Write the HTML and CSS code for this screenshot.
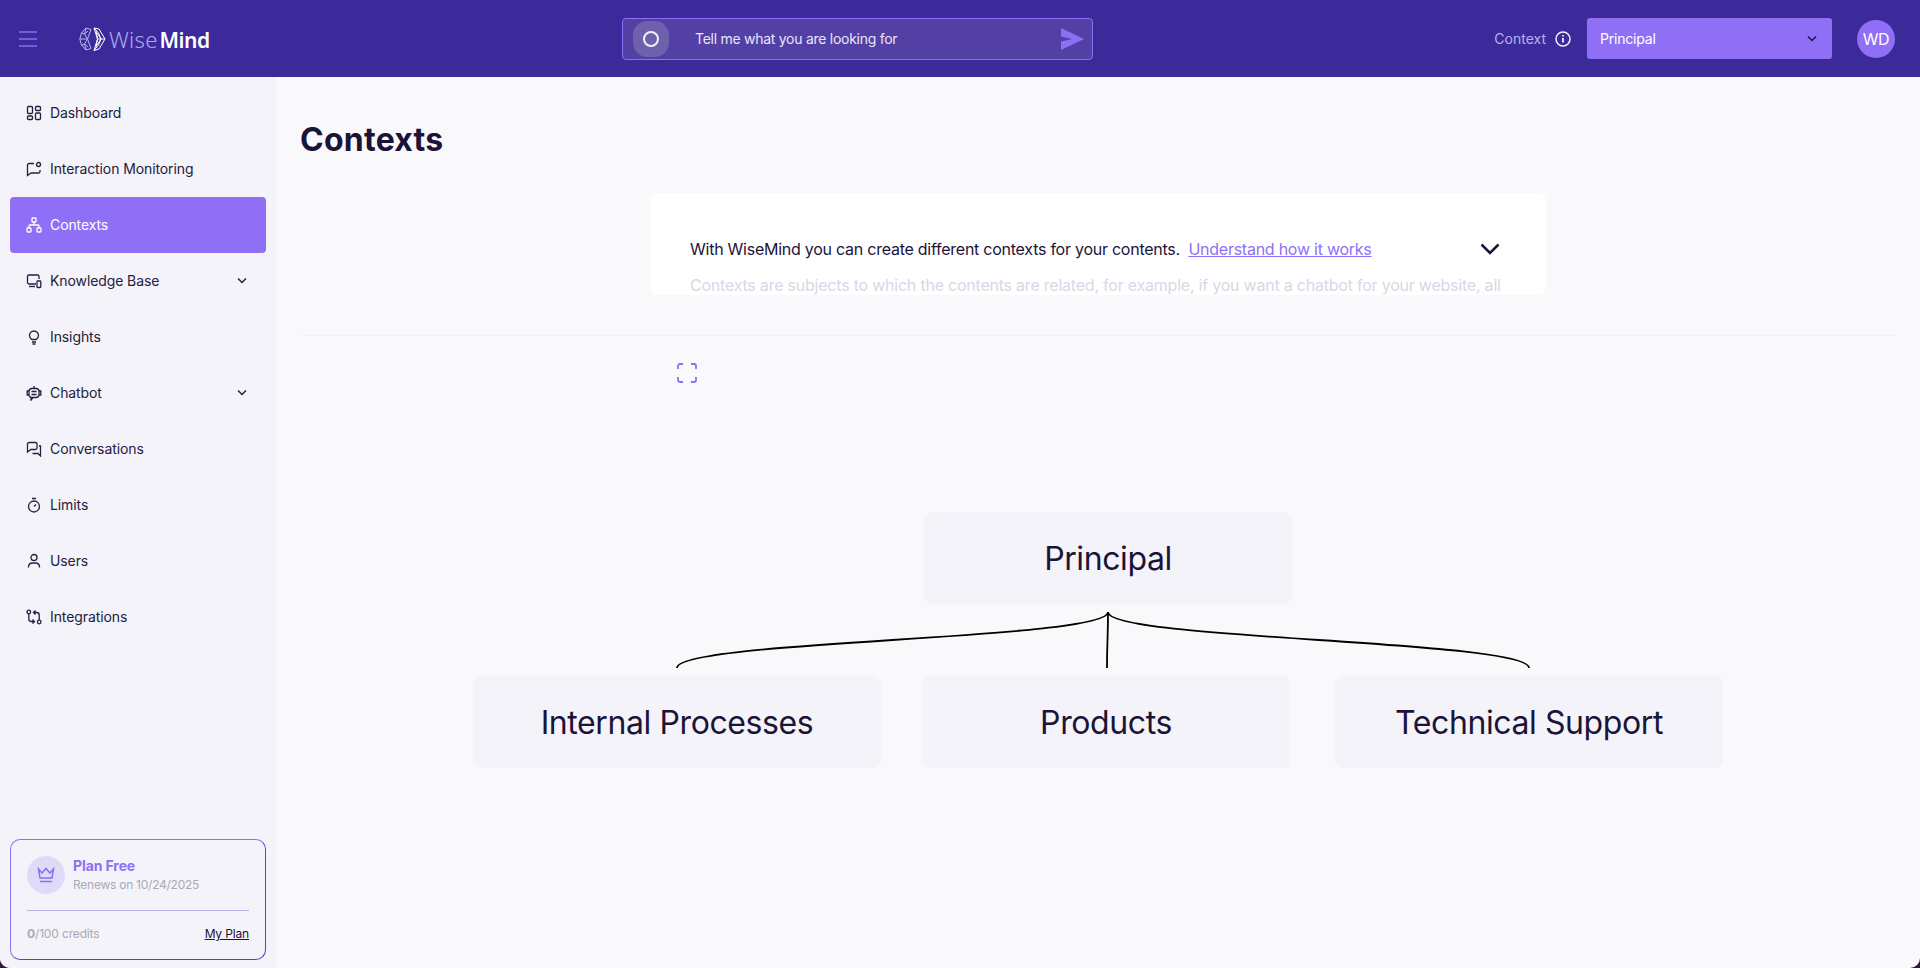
FILE: index.html
```html
<!DOCTYPE html>
<html lang="en">
<head>
    <meta charset="utf-8">
    <title>Contexts - WiseMind</title>
    <link rel="stylesheet" href="styles.css">
</head>
<body>
    <div class="app">
        <!-- top bar -->
        <header class="topbar">
            <div class="topbar-left">
                <svg class="burger" width="18" height="16" viewBox="0 0 18 16" fill="none" stroke="#8b6ff5" stroke-width="1.600"><path d="M0 1h18M0 8h18M0 15h18"/></svg>
                <div class="logo">
                    <svg width="27" height="24" viewBox="0 0 27 24" fill="none" stroke-width="1">
                        <g stroke="#b4b4f0"><path d="M7 1l5 1.500-3.500 9.500 3.500 9.500-5 1.500-4.500-5L.8 12l1.700-6z"/><path d="M7 1L5.500 7l3 5-3 5 1.500 6"/><path d="M2.500 6l3 1M.8 12h7.700M2.500 18l3-1M5.500 7L9 4M5.500 17L9 20"/></g>
                        <g stroke="#fff"><path d="M15 1l5 1 6 10-6 10-5 1.500 3.500-11.500z"/><path d="M15 1l4.500 5L22 12l-2.500 6L15 23.500"/><path d="M17 3.500l1.500 8.500M18.500 12H26M17 20.500l1.500-8.500M18 6l4 6M18 18l4-6"/></g>
                    </svg>
                    <span class="logo-text"><span class="logo-thin">Wise</span><b>Mind</b></span>
                </div>
            </div>
            <div class="search">
                <span class="search-blob"><span class="search-ring"></span></span>
                <span class="search-text">Tell me what you are looking for</span>
                <svg width="24" height="22" viewBox="0 0 24 22" fill="#8b6ff5"><path d="M1 0l23 11L1 22v-8.500l11-2.500-11-2.500z"/></svg>
            </div>
            <div class="topbar-right">
                <span class="context-label">Context</span>
                <svg class="info" width="16" height="16" viewBox="0 0 16 16" fill="none" stroke="#f2efff"><circle cx="8" cy="8" r="7" stroke-width="1.500"/><path d="M8 7v4.500" stroke-width="1.800"/><path d="M8 4v1.600" stroke-width="1.800"/></svg>
                <div class="select">
                    <span>Principal</span>
                    <svg width="12" height="8" viewBox="0 0 12 8" fill="none" stroke="#1c1438" stroke-width="1.500"><path d="M2 1.500l4 4 4-4"/></svg>
                </div>
                <div class="avatar">WD</div>
            </div>
        </header>

        <div class="body-row">
            <!-- menu -->
            <aside class="sidebar">
                <nav class="menu">
                    <a class="menu-item">
                        <svg class="ico" viewBox="0 0 16 16"><rect x="1.500" y="1.500" width="5" height="7" rx="1"/><rect x="9.500" y="1.500" width="5" height="4" rx="1"/><rect x="1.500" y="11" width="5" height="3.500" rx="1"/><rect x="9.500" y="8" width="5" height="6.500" rx="1"/></svg>
                        <span>Dashboard</span>
                    </a>
                    <a class="menu-item">
                        <svg class="ico" viewBox="0 0 16 16"><path d="M8 2.500H3A1.500 1.500 0 0 0 1.500 4v10.500L5 12h7.500A1.500 1.500 0 0 0 14 10.500V9"/><circle cx="12.500" cy="3.500" r="2"/></svg>
                        <span>Interaction Monitoring</span>
                    </a>
                    <a class="menu-item active">
                        <svg class="ico" viewBox="0 0 16 16"><rect x="6" y="1" width="4" height="4" rx=".8"/><rect x="1" y="11" width="4" height="4" rx=".8"/><rect x="11" y="11" width="4" height="4" rx=".8"/><path d="M8 5v3M3 11V9a1 1 0 0 1 1-1h8a1 1 0 0 1 1 1v2"/></svg>
                        <span>Contexts</span>
                    </a>
                    <a class="menu-item">
                        <svg class="ico" viewBox="0 0 16 16"><path d="M10 11H3a1.500 1.500 0 0 1-1.500-1.500V3.500A1.500 1.500 0 0 1 3 2h8.500A1.500 1.500 0 0 1 13 3.500V6"/><path d="M3 13.500h6"/><rect x="11" y="8" width="3.800" height="6.500" rx=".8"/></svg>
                        <span>Knowledge Base</span>
                        <svg class="caret" viewBox="0 0 12 8"><path d="M2 1.500l4 4 4-4"/></svg>
                    </a>
                    <a class="menu-item">
                        <svg class="ico" viewBox="0 0 16 16"><path d="M5.800 10.500C4.500 9.500 3.500 8.300 3.500 6.500a4.500 4.500 0 0 1 9 0c0 1.800-1 3-2.300 4z"/><path d="M6 13h4M6.500 15h3"/></svg>
                        <span>Insights</span>
                    </a>
                    <a class="menu-item">
                        <svg class="ico" viewBox="0 0 16 16"><rect x="3" y="3.500" width="10" height="9" rx="3"/><path d="M8 3.500V1M5.500 6.500h5M5.500 9.500h5M3 6H1.200v4H3M13 6h1.800v4H13M5 12.500V15l2-2.500"/></svg>
                        <span>Chatbot</span>
                        <svg class="caret" viewBox="0 0 12 8"><path d="M2 1.500l4 4 4-4"/></svg>
                    </a>
                    <a class="menu-item">
                        <svg class="ico" viewBox="0 0 16 16"><path d="M3 1.500h6.500A1.500 1.500 0 0 1 11 3v4a1.500 1.500 0 0 1-1.500 1.500H5L1.500 11V3A1.500 1.500 0 0 1 3 1.500z"/><path d="M13 5h1.500v10L12 12.500H6.500"/></svg>
                        <span>Conversations</span>
                    </a>
                    <a class="menu-item">
                        <svg class="ico" viewBox="0 0 16 16"><circle cx="8" cy="9.500" r="5.500"/><path d="M6 1.500h4M8 9.500l2-2"/></svg>
                        <span>Limits</span>
                    </a>
                    <a class="menu-item">
                        <svg class="ico" viewBox="0 0 16 16"><circle cx="8" cy="4.500" r="3"/><path d="M2.500 14.500v-1a4 4 0 0 1 4-3.500h3a4 4 0 0 1 4 3.500v1"/></svg>
                        <span>Users</span>
                    </a>
                    <a class="menu-item">
                        <svg class="ico" viewBox="0 0 16 16"><circle cx="2.800" cy="3" r="1.800"/><circle cx="13.200" cy="13" r="1.800"/><path d="M2.800 5v5c0 1.500 1 2.500 2.500 2.500H8M6.500 10.500l2 2-2 2M13.200 11V6c0-1.500-1-2.500-2.500-2.500H8M9.500 1.500l-2 2 2 2"/></svg>
                        <span>Integrations</span>
                    </a>
                </nav>
                <div class="plan">
                    <div class="plan-top">
                        <span class="plan-badge">
                            <svg width="18" height="16" viewBox="0 0 18 16" fill="none" stroke="#8b6ff5" stroke-width="1.500"><path d="M1.500 2l3.500 4L9 1.500 13 6l3.500-4-1.500 9H3z"/><path d="M3 14.500h12"/></svg>
                        </span>
                        <div>
                            <div class="plan-name">Plan Free</div>
                            <div class="plan-date">Renews on 10/24/2025</div>
                        </div>
                    </div>
                    <div class="plan-bottom">
                        <span class="credits"><b>0</b>/100 credits</span>
                        <a class="my-plan">My Plan</a>
                    </div>
                </div>
            </aside>

            <main class="main">
                <h1 class="title">Contexts</h1>
                <section class="intro-wrap">
                    <div class="intro">
                        <div class="intro-row">
                            <p>With WiseMind you can create different contexts for your contents.&nbsp; <a class="intro-link">Understand how it works</a></p>
                            <svg width="20" height="12" viewBox="0 0 20 12" fill="none" stroke="#1c1438" stroke-width="2.500"><path d="M1.500 1.500L10 10l8.500-8.500"/></svg>
                        </div>
                        <p class="intro-more">Contexts are subjects to which the contents are related, for example, if you want a chatbot for your website, all</p>
                    </div>
                </section>
                <hr class="divider">

                <!-- context tree -->
                <div class="canvas">
                    <svg class="fit" width="20" height="20" viewBox="0 0 20 20" fill="none" stroke="#8b6ff5" stroke-width="1.800"><path d="M1 6V3a2 2 0 0 1 2-2h3M14 1h3a2 2 0 0 1 2 2v3M19 14v3a2 2 0 0 1-2 2h-3M6 19H3a2 2 0 0 1-2-2v-3"/></svg>
                    <svg class="links" width="1644" height="633" viewBox="0 0 1644 633" fill="none" stroke="#000" stroke-width="1.800">
                        <path d="M832 277C832 305 401 305 401 333"/>
                        <path d="M832 277C832 305 831 305 831 333"/>
                        <path d="M832 277C832 305 1253 305 1253 333"/>
                    </svg>
                    <div class="node node-root">Principal</div>
                    <div class="node node-a">Internal Processes</div>
                    <div class="node node-b">Products</div>
                    <div class="node node-c">Technical Support</div>
                </div>
            </main>
        </div>
    </div>
</body>
</html>
```

FILE: styles.css
```css
* {
    margin: 0;
    padding: 0;
    box-sizing: border-box;
}
html, body {
    height: 100%;
    overflow: hidden;
    background: #2b1b3a;
}
body {
    font-family: Inter, "Noto Sans", sans-serif;
    color: #1c1438;
}
.app {
    height: 968px;
    display: flex;
    flex-direction: column;
    border-radius: 0 0 10px 10px;
    overflow: hidden;
    background: #f9f9fc;
}

/* top bar */
.topbar {
    height: 77px;
    flex: none;
    background: #3d2a9a;
    display: flex;
    align-items: center;
    position: relative;
}
.topbar-left {
    display: flex;
    align-items: center;
    padding-left: 19px;
    width: 622px;
}
.burger {
    margin-right: 42px;
}
.logo {
    display: flex;
    align-items: center;
    gap: 3px;
}
.logo-text {
    font-family: "Noto Sans", sans-serif;
    font-size: 22px;
    letter-spacing: 0.3px;
    color: #fff;
}
.logo-thin {
    color: #a9aaf0;
    font-weight: 300;
    margin-right: 2px;
}
.logo-text b {
    font-weight: 600;
    font-size: 21px;
    letter-spacing: -0.5px;
}
.search {
    width: 471px;
    height: 42px;
    background: #5340a4;
    border: 1px solid #8b6ff5;
    border-radius: 4px;
    display: flex;
    align-items: center;
    padding: 0 8px 0 10px;
    color: #e9e4fb;
    font-size: 14px;
}
.search-blob {
    width: 36px;
    height: 36px;
    background: #6f60ae;
    border-radius: 40%;
    display: flex;
    align-items: center;
    justify-content: center;
    flex: none;
}
.search-ring {
    width: 16px;
    height: 16px;
    border: 2px solid #f2f0fb;
    border-radius: 50%;
}
.search-text {
    margin-left: 26px;
    flex: 1;
    letter-spacing: -0.27px;
}
.topbar-right {
    margin-left: auto;
    display: flex;
    align-items: center;
    padding-right: 25px;
}
.context-label {
    color: #b7b2ec;
    font-size: 14px;
    letter-spacing: 0;
}
.info {
    margin-left: 9px;
}
.select {
    width: 245px;
    height: 41px;
    background: #8f6ff5;
    border-radius: 3px;
    margin-left: 16px;
    padding: 0 14px 0 13px;
    display: flex;
    align-items: center;
    justify-content: space-between;
    color: #fff;
    font-size: 14px;
    letter-spacing: -0.2px;
}
.avatar {
    width: 38px;
    height: 38px;
    margin-left: 25px;
    border-radius: 50%;
    background: #8f6ff5;
    color: #fff;
    font-size: 16px;
    display: flex;
    align-items: center;
    justify-content: center;
    letter-spacing: -0.5px;
}

/* sidebar */
.body-row {
    flex: 1;
    display: flex;
    min-height: 0;
}
.sidebar {
    width: 276px;
    flex: none;
    background: #f3f3f9;
    padding: 8px 10px 8px;
    display: flex;
    flex-direction: column;
    justify-content: space-between;
}
.menu {
    display: flex;
    flex-direction: column;
}
.menu-item {
    height: 56px;
    display: flex;
    align-items: center;
    padding: 0 18px 0 16px;
    font-size: 14px;
    letter-spacing: -0.1px;
    color: #252040;
    border-radius: 4px;
}
.menu-item span {
    flex: 1;
    margin-left: 8px;
    padding-bottom: 2px;
}
.menu-item.active {
    background: #8f6ff5;
    color: #fff;
}
.ico {
    width: 16px;
    height: 16px;
    fill: none;
    stroke: #252040;
    stroke-width: 1.300;
    flex: none;
}
.active .ico {
    stroke: #fff;
}
.caret {
    width: 12px;
    height: 8px;
    fill: none;
    stroke: #252040;
    stroke-width: 1.500;
}

/* plan card */
.plan {
    height: 121px;
    border: 1px solid;
    border-color: #8f6ff5 #5a45b5 #5a45b5 #8f6ff5;
    border-radius: 10px;
    padding: 16px 16px 0;
}
.plan-top {
    display: flex;
    align-items: center;
    gap: 8px;
    height: 38px;
}
.plan-badge {
    width: 38px;
    height: 38px;
    background: #e0daf9;
    border-radius: 50%;
    display: flex;
    align-items: center;
    justify-content: center;
}
.plan-name {
    color: #8f6ff5;
    font-size: 14px;
    font-weight: 700;
    letter-spacing: -0.1px;
    line-height: 20px;
}
.plan-date {
    color: #a9a9b5;
    font-size: 12px;
    letter-spacing: -0.25px;
    line-height: 18px;
}
.plan-bottom {
    margin-top: 16px;
    border-top: 1px solid #b9b1e3;
    padding-top: 15px;
    display: flex;
    justify-content: space-between;
    font-size: 12px;
    letter-spacing: -0.15px;
}
.credits {
    color: #a9a9b5;
}
.my-plan {
    color: #1c1438;
    text-decoration: underline;
}

/* main */
.main {
    flex: 1;
    position: relative;
    min-width: 0;
}
.title {
    font-size: 32px;
    font-weight: 700;
    line-height: 40px;
    letter-spacing: 0.25px;
    padding: 43px 0 0 24px;
}
.intro-wrap {
    padding-left: 374px;
    margin-top: 33px;
}
.intro {
    width: 896px;
    height: 102px;
    background: #fff;
    border-radius: 8px;
    padding: 43px 46px 0 40px;
    overflow: hidden;
    position: relative;
}
.intro-row {
    display: flex;
    align-items: center;
    justify-content: space-between;
    font-size: 16px;
    letter-spacing: -0.25px;
    line-height: 26px;
}
.intro-link {
    color: #8f6ff5;
    text-decoration: underline;
}
.intro-more {
    font-size: 16px;
    letter-spacing: -0.22px;
    white-space: nowrap;
    margin-top: 10px;
    color: #d8d8e6;
    line-height: 26px;
}
.divider {
    border: 0;
    border-top: 1px solid #f2f2f6;
    margin: 40px 24px 0;
}

/* tree, nodes placed on the canvas */
.canvas {
    position: absolute;
    left: 0;
    top: 258px;
    width: 1644px;
    height: 633px;
}
.fit {
    position: absolute;
    left: 401px;
    top: 28px;
}
.links {
    position: absolute;
    left: 0;
    top: 0;
}
.node {
    position: absolute;
    height: 92px;
    background: #f3f3f9;
    border-radius: 8px;
    display: flex;
    align-items: center;
    justify-content: center;
    font-size: 32px;
    letter-spacing: -0.4px;
    color: #1c1438;
}
.node-root {
    left: 648px;
    top: 177px;
    width: 368px;
}
.node-a {
    left: 197px;
    top: 341px;
    width: 408px;
}
.node-b {
    left: 646px;
    top: 341px;
    width: 368px;
}
.node-c {
    left: 1059px;
    top: 341px;
    width: 388px;
}
```
